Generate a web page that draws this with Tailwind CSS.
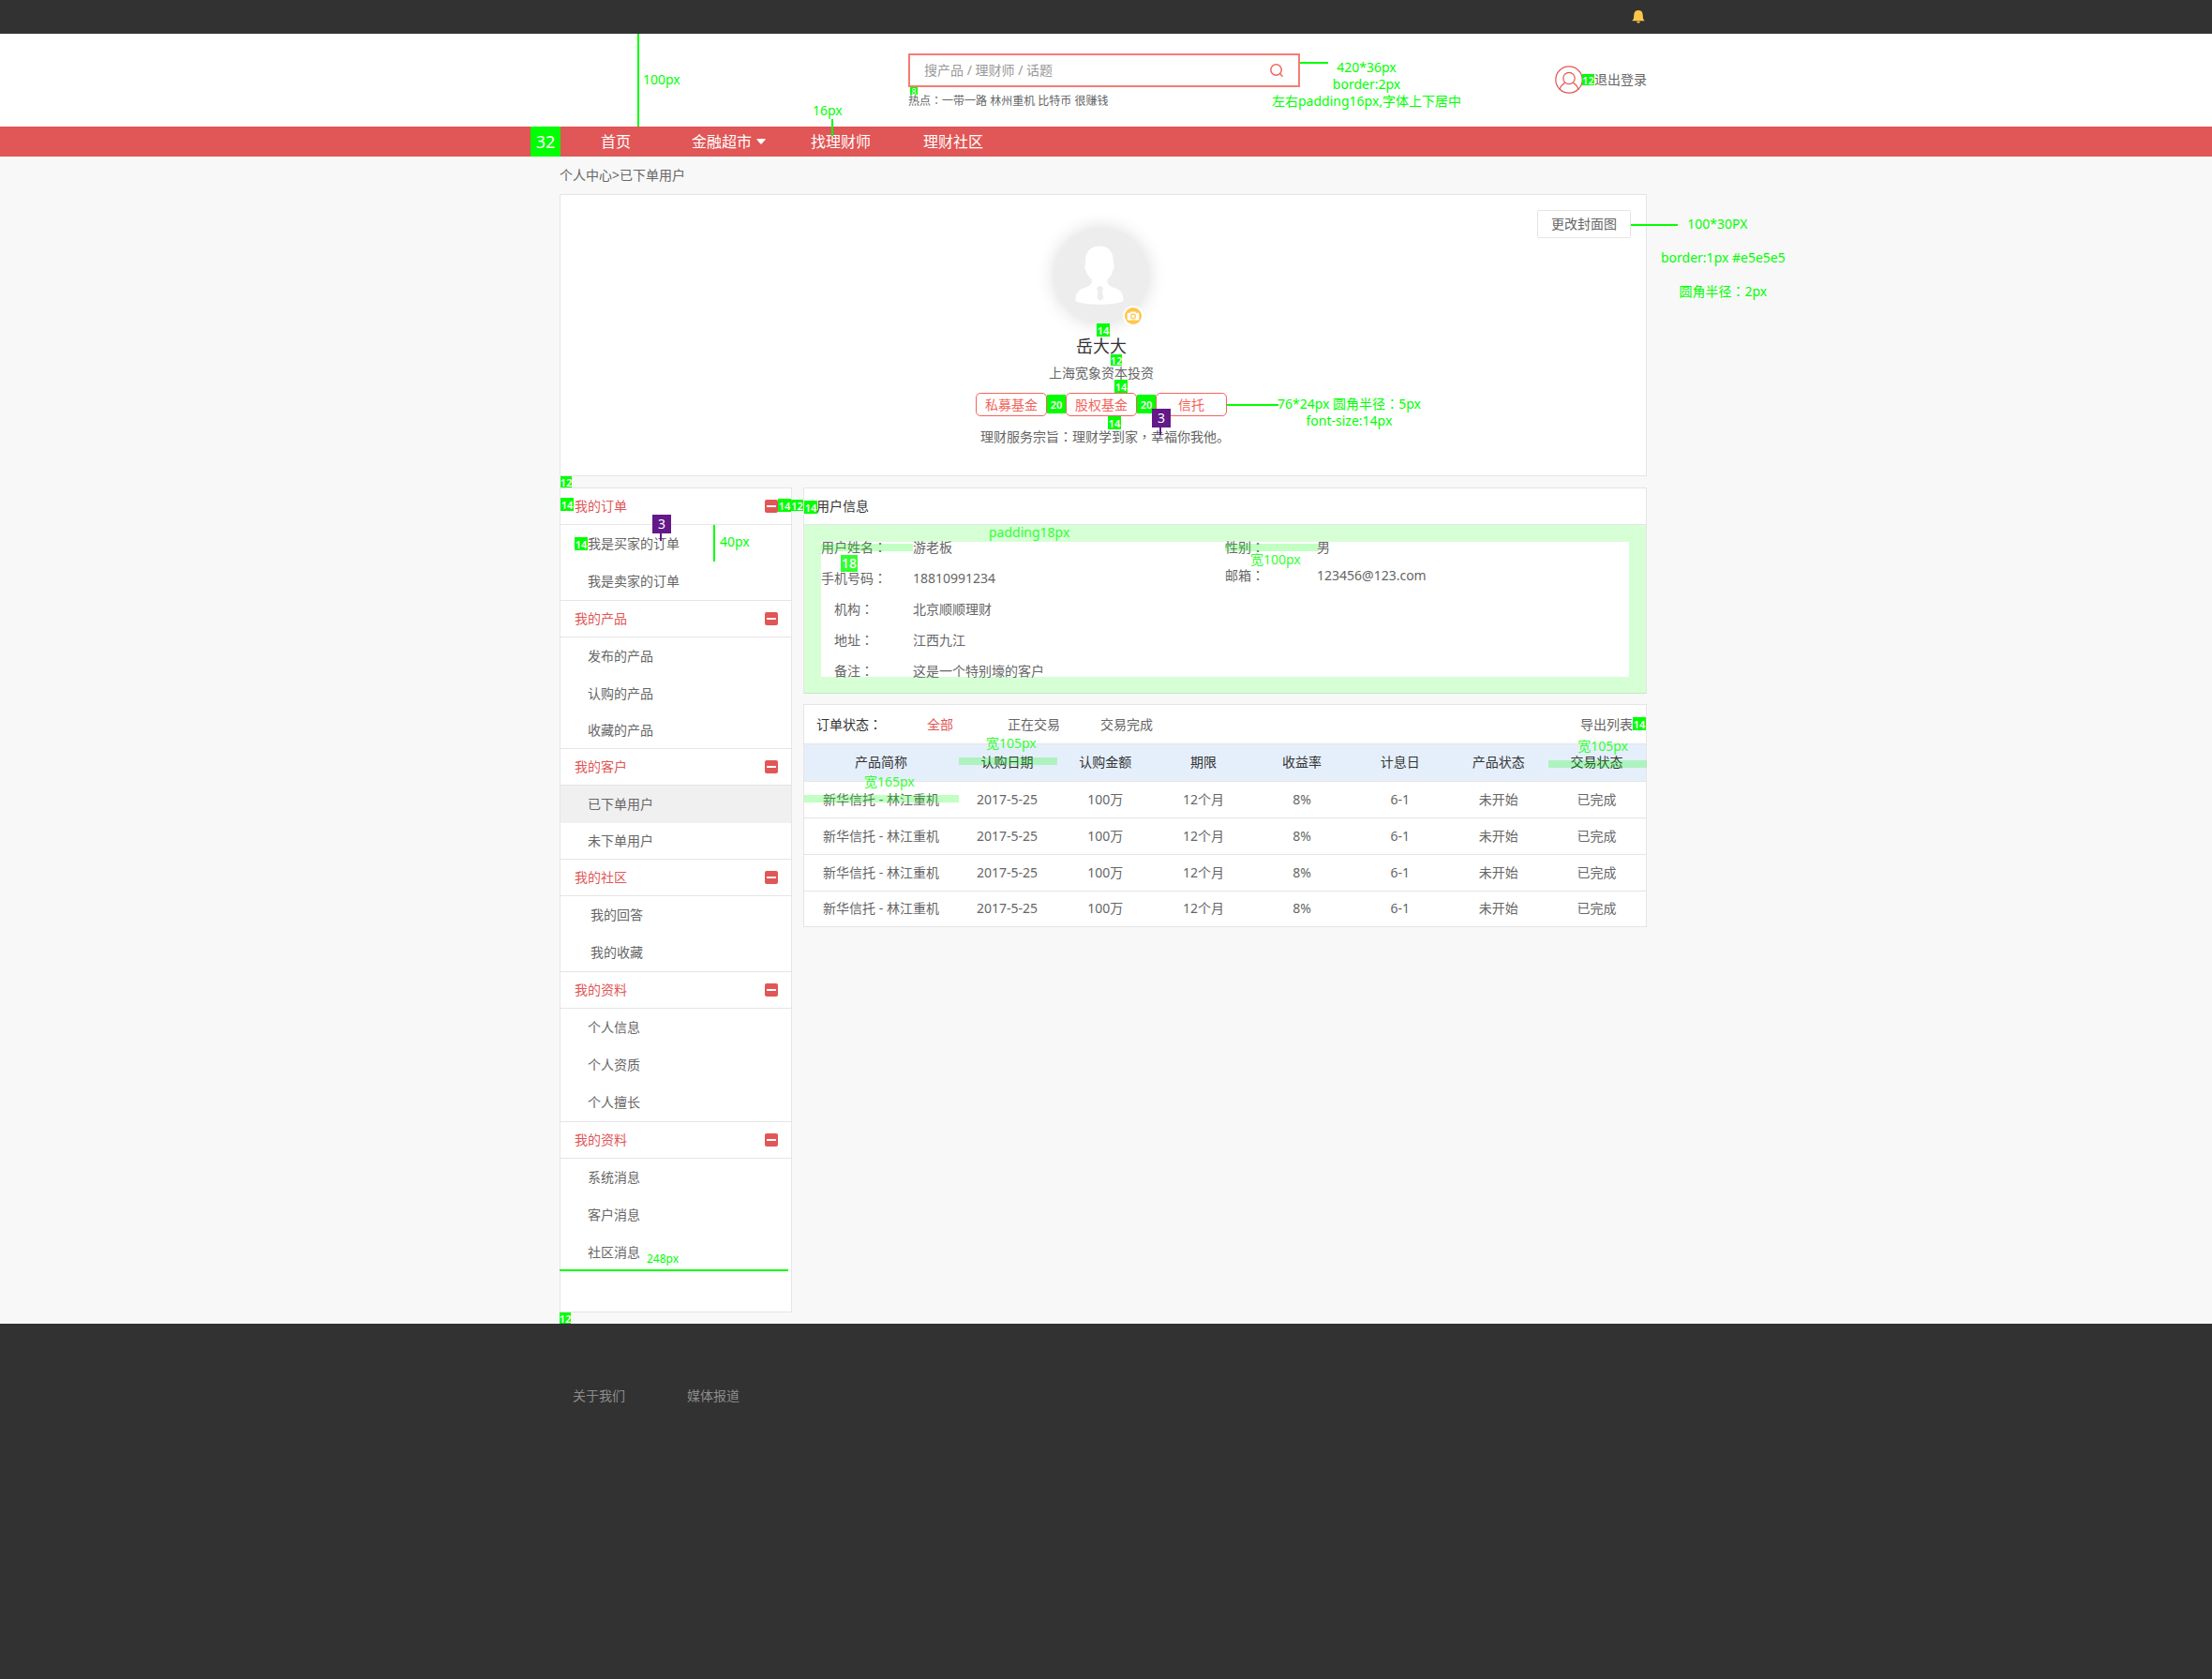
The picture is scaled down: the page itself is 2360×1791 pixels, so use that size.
<!DOCTYPE html>
<html lang="zh-CN">
<head>
<meta charset="utf-8">
<meta name="viewport" content="width=device-width, initial-scale=1">
<title>个人中心 - 已下单用户</title>
<script src="https://cdn.jsdelivr.net/npm/@tailwindcss/browser@4"></script>
</head>
<body class="flex min-h-screen flex-col bg-[#f8f8f8] font-['Noto_Sans','Noto_Sans_CJK_SC',sans-serif] text-sm leading-5 text-[#666]">

<!-- Top bar -->
<div class="bg-[#323232] pr-1.5">
  <div class="mx-auto flex h-9 w-full max-w-[1160px] items-center justify-end">
    <button type="button" aria-label="消息" class="pr-0.5">
      <svg class="h-3.5 w-3.5" viewBox="0 0 14 14" fill="#ffc64a"><path d="M7 0C4 0 2.400 2 2.300 4.800L2 8.500C1.800 9.800 .8 10.200 .4 11.300H13.600C13.200 10.200 12.200 9.800 12 8.500L11.700 4.800C11.600 2 10 0 7 0Z"/><path d="M5.200 11.800H8.800C8.800 13.200 8 13.600 7 13.600S5.200 13.200 5.200 11.800Z"/></svg>
    </button>
  </div>
</div>

<!-- Header -->
<header class="bg-white pr-1.5">
  <div class="relative mx-auto flex h-[99px] w-full max-w-[1160px] items-start justify-between">
    <form class="ml-[372px] mt-[21px] w-[418px]" onsubmit="return false">
      <div class="flex h-9 items-center border-2 border-[#f47d75] pr-4 pl-[15px]">
        <input type="search" aria-label="搜索" placeholder="搜产品 / 理财师 / 话题" class="min-w-0 flex-1 bg-transparent leading-5 outline-none placeholder:text-[#999]">
        <button type="submit" aria-label="搜索">
          <svg class="h-3.5 w-3.5" viewBox="0 0 14 14" fill="none" stroke="#f0645c" stroke-width="1.500"><circle cx="6.500" cy="6.500" r="5.700"/><path d="M10.800 10.800L13.500 13.700"/></svg>
        </button>
      </div>
      <p class="mt-[5px] text-xs leading-5">热点<span lang="zh-TW" class="font-['Noto_Sans_CJK_TC',sans-serif] leading-none">：</span><a href="#">一带一路</a> <a href="#">林州重机</a> <a href="#">比特币</a> <a href="#">很赚钱</a></p>
    </form>
    <a href="#" class="mt-[34px] flex items-center gap-3">
      <svg class="h-[30px] w-[30px]" viewBox="0 0 30 30" fill="none" stroke="#e05555" stroke-width="1.200"><circle cx="15" cy="15" r="14.200"/><circle cx="15" cy="13.500" r="6.200"/><path d="M5 25.500C6 21.500 8 19.800 10.800 18.200M25 25.500C24 21.500 22 19.800 19.200 18.200"/></svg>
      退出登录
    </a>

    <!-- Measurements -->
    <div class="absolute top-0 left-[83px] h-[99px] w-0.5 bg-[#00ff00]"></div>
    <span class="absolute top-[39px] left-[89px] text-[#00ff00]">100px</span>
    <span class="absolute top-[72px] left-[270px] text-[#00ff00]">16px</span>
    <div class="absolute top-[91px] left-[290px] z-10 h-[18px] w-0.5 bg-[#00ff00]"></div>
    <span class="absolute top-[57px] left-[374px] flex h-2 w-2 items-center justify-center bg-[#00ff00] text-[9px] leading-none text-white">8</span>
    <div class="absolute top-[30px] left-[790px] h-0.5 w-[30px] bg-[#00ff00]"></div>
    <p class="absolute top-[27px] left-[760px] text-center leading-[18px] whitespace-nowrap text-[#00ff00]">420*36px<br>border:2px<br>左右padding16px,字体上下居中</p>
    <span class="absolute top-[43px] left-[1091px] flex h-3 w-[13px] items-center justify-center bg-[#00ff00] text-[11px] leading-none font-semibold text-white">12</span>
  </div>
</header>

<!-- Navigation -->
<nav class="bg-[#e15656] pr-1.5">
  <div class="relative mx-auto flex h-8 w-full max-w-[1160px] items-center pl-11 text-base leading-6 text-white">
    <span class="absolute top-0 -left-[31px] flex h-8 w-8 items-center justify-center bg-[#00ff00] text-lg">32</span>
    <a href="#">首页</a>
    <a href="#" class="ml-[65px] flex items-center gap-[5px]">金融超市
      <svg class="h-1.5 w-2.5" viewBox="0 0 10 6" fill="#fff"><path d="M1 0H9Q10 0 9.500 1L5.600 5.500Q5 6 4.400 5.500L.5 1Q0 0 1 0Z"/></svg>
    </a>
    <a href="#" class="ml-12">找理财师</a>
    <a href="#" class="ml-14">理财社区</a>
  </div>
</nav>

<main class="pr-1.5 pb-3">
  <div class="mx-auto w-full max-w-[1160px]">
    <p class="py-[10px]"><a href="#">个人中心</a>&gt;<a href="#">已下单用户</a></p>

    <!-- Cover -->
    <section class="relative flex flex-col items-center border border-[#e5e5e5] bg-white pt-9 pr-1 pb-[31px]">
      <button type="button" class="absolute top-4 right-4 h-[30px] w-[100px] rounded-xs border border-[#e5e5e5]">更改封面图</button>
      <div class="relative h-[100px] w-[100px] rounded-full bg-[#ededed] shadow-[0_0_20px_rgba(0,0,0,0.16)]">
        <svg class="h-[100px] w-[100px]" viewBox="0 0 100 100"><path fill="#fff" d="M48 18.500C39 18.500 33.500 24 33.200 33L33 38C31.800 39.500 32.200 42 33.500 44.500C34.500 49 37.500 52 40 54.500C40.800 58 38 61.500 31 63.500C25 65.500 22.500 69 22.500 77C30 82 66 82 73.500 77C73.500 69 71 65.500 65 63.500C58 61.500 55.500 58 56.500 54.500C59 52 61.500 49 62.500 44.500C64 42 64.500 39.500 63 38L62.800 33C62.500 24 57 18.500 48 18.500Z"/><path fill="#ededed" d="M46 62Q48.500 60 51.500 62L52 64L50.800 67L52.500 74L49 77L45.500 74L46.500 67L45.200 64Z"/></svg>
        <button type="button" aria-label="更换头像" class="absolute right-[5px] -bottom-[4px] flex h-[22px] w-[22px] items-center justify-center rounded-full bg-white">
          <svg class="h-[18px] w-[18px]" viewBox="0 0 18 18"><circle cx="9" cy="9" r="9" fill="#ffc64a"/><path fill="#fff" d="M3.500 5.800H5.800L6.600 4.500H11.400L12.200 5.800H14.500Q15.300 5.800 15.300 6.600V12.600Q15.300 13.400 14.500 13.400H3.500Q2.700 13.400 2.700 12.600V6.600Q2.700 5.800 3.500 5.800Z"/><circle cx="9" cy="9.500" r="2.400" fill="none" stroke="#ffc64a" stroke-width="1.200"/></svg>
        </button>
      </div>
      <h1 class="mt-[13px] text-lg leading-6 text-[#333]">岳大大</h1>
      <p class="mt-[7px]">上海宽象资本投资</p>
      <ul class="mt-[11px] flex gap-5 text-[#f2645c]">
        <li class="flex h-[25px] w-[76px] items-center justify-center rounded-[5px] border border-[#f2645c]">私募基金</li>
        <li class="flex h-[25px] w-[76px] items-center justify-center rounded-[5px] border border-[#f2645c]">股权基金</li>
        <li class="flex h-[25px] w-[76px] items-center justify-center rounded-[5px] border border-[#f2645c]">信托</li>
      </ul>
      <p class="mt-3 pl-2">理财服务宗旨<span lang="zh-TW" class="font-['Noto_Sans_CJK_TC',sans-serif] leading-none">：</span>理财学到家<span lang="zh-TW" class="font-['Noto_Sans_CJK_TC',sans-serif] leading-none">，</span>幸福你我他。</p>

      <!-- Measurements -->
      <span class="absolute top-[137px] left-[572px] flex h-3.5 w-3.5 items-center justify-center bg-[#00ff00] text-[11px] leading-none font-semibold text-white">14</span>
      <span class="absolute top-[170px] left-[587px] flex h-3 w-3 items-center justify-center bg-[#00ff00] text-[11px] leading-none font-semibold text-white">12</span>
      <span class="absolute top-[197px] left-[591px] flex h-3.5 w-3.5 items-center justify-center bg-[#00ff00] text-[11px] leading-none font-semibold text-white">14</span>
      <span class="absolute top-[213px] left-[519px] flex h-5 w-5 items-center justify-center bg-[#00ff00] text-[11px] leading-none font-semibold text-white">20</span>
      <span class="absolute top-[213px] left-[615px] flex h-5 w-5 items-center justify-center bg-[#00ff00] text-[11px] leading-none font-semibold text-white">20</span>
      <span class="absolute top-[236px] left-[584px] flex h-3.5 w-3.5 items-center justify-center bg-[#00ff00] text-[11px] leading-none font-semibold text-white">14</span>
      <span class="absolute top-[228px] left-[631px] flex h-5 w-5 items-center justify-center bg-[#631987] leading-none text-white">3</span>
      <div class="absolute top-[248px] left-[639px] h-2 w-0.5 bg-[#631987]"></div>
      <div class="absolute top-[223px] left-[711px] h-0.5 w-[55px] bg-[#00ff00]"></div>
      <p class="absolute top-[214px] left-[765px] text-center leading-[18px] whitespace-nowrap text-[#00ff00]">76*24px 圆角半径<span lang="zh-TW" class="font-['Noto_Sans_CJK_TC',sans-serif] leading-none">：</span>5px<br>font-size:14px</p>
      <div class="absolute top-[31px] left-[1142px] h-0.5 w-[50px] bg-[#00ff00]"></div>
      <p class="absolute top-[13px] left-[1174px] text-center leading-9 whitespace-nowrap text-[#00ff00]"><span class="pr-3">100*30PX</span><br>border:1px #e5e5e5<br>圆角半径<span lang="zh-TW" class="font-['Noto_Sans_CJK_TC',sans-serif] leading-none">：</span>2px</p>
      <span class="absolute top-[300px] left-0 flex h-3 w-3 items-center justify-center bg-[#00ff00] text-[11px] leading-none font-semibold text-white">12</span>
    </section>

    <div class="mt-3 flex items-start gap-3">
      <!-- Side menu -->
      <aside class="relative w-[248px] shrink-0 border border-[#e5e5e5] bg-white pb-[43px]">
        <h2 class="flex h-[39px] items-center justify-between border-b border-[#e5e5e5] pr-3.5 pl-[15px] text-[#e15656]">我的订单
          <button type="button" aria-label="收起我的订单" class="flex h-3.5 w-3.5 items-center justify-center rounded-xs bg-[#e15656]"><span class="h-0.5 w-2.5 bg-white"></span></button></h2>
        <ul>
          <li><a href="#" class="flex h-10 items-center pl-[29px]">我是买家的订单</a></li>
          <li><a href="#" class="flex h-10 items-center pl-[29px]">我是卖家的订单</a></li>
        </ul>
        <h2 class="flex h-10 items-center justify-between border-y border-[#e5e5e5] pr-3.5 pl-[15px] text-[#e15656]">我的产品
          <button type="button" aria-label="收起我的产品" class="flex h-3.5 w-3.5 items-center justify-center rounded-xs bg-[#e15656]"><span class="h-0.5 w-2.5 bg-white"></span></button></h2>
        <ul>
          <li><a href="#" class="flex h-10 items-center pl-[29px]">发布的产品</a></li>
          <li><a href="#" class="flex h-10 items-center pl-[29px]">认购的产品</a></li>
          <li><a href="#" class="flex h-[38px] items-center pl-[29px]">收藏的产品</a></li>
        </ul>
        <h2 class="flex h-10 items-center justify-between border-y border-[#e5e5e5] pr-3.5 pl-[15px] text-[#e15656]">我的客户
          <button type="button" aria-label="收起我的客户" class="flex h-3.5 w-3.5 items-center justify-center rounded-xs bg-[#e15656]"><span class="h-0.5 w-2.5 bg-white"></span></button></h2>
        <ul>
          <li><a href="#" aria-current="page" class="flex h-10 items-center bg-[#f0f0f0] pl-[29px]">已下单用户</a></li>
          <li><a href="#" class="flex h-[38px] items-center pl-[29px]">未下单用户</a></li>
        </ul>
        <h2 class="flex h-10 items-center justify-between border-y border-[#e5e5e5] pr-3.5 pl-[15px] text-[#e15656]">我的社区
          <button type="button" aria-label="收起我的社区" class="flex h-3.5 w-3.5 items-center justify-center rounded-xs bg-[#e15656]"><span class="h-0.5 w-2.5 bg-white"></span></button></h2>
        <ul>
          <li><a href="#" class="flex h-10 items-center pl-8">我的回答</a></li>
          <li><a href="#" class="flex h-10 items-center pl-8">我的收藏</a></li>
        </ul>
        <h2 class="flex h-10 items-center justify-between border-y border-[#e5e5e5] pr-3.5 pl-[15px] text-[#e15656]">我的资料
          <button type="button" aria-label="收起我的资料" class="flex h-3.5 w-3.5 items-center justify-center rounded-xs bg-[#e15656]"><span class="h-0.5 w-2.5 bg-white"></span></button></h2>
        <ul>
          <li><a href="#" class="flex h-10 items-center pl-[29px]">个人信息</a></li>
          <li><a href="#" class="flex h-10 items-center pl-[29px]">个人资质</a></li>
          <li><a href="#" class="flex h-10 items-center pl-[29px]">个人擅长</a></li>
        </ul>
        <h2 class="flex h-10 items-center justify-between border-y border-[#e5e5e5] pr-3.5 pl-[15px] text-[#e15656]">我的资料
          <button type="button" aria-label="收起消息" class="flex h-3.5 w-3.5 items-center justify-center rounded-xs bg-[#e15656]"><span class="h-0.5 w-2.5 bg-white"></span></button></h2>
        <ul>
          <li><a href="#" class="flex h-10 items-center pl-[29px]">系统消息</a></li>
          <li><a href="#" class="flex h-10 items-center pl-[29px]">客户消息</a></li>
          <li><a href="#" class="flex h-10 items-center pl-[29px]">社区消息</a></li>
        </ul>

        <!-- Measurements -->
        <span class="absolute top-[10px] left-0 flex h-3.5 w-3.5 items-center justify-center bg-[#00ff00] text-[11px] leading-none font-semibold text-white">14</span>
        <span class="absolute top-[52px] left-[15px] flex h-3.5 w-3.5 items-center justify-center bg-[#00ff00] text-[11px] leading-none font-semibold text-white">14</span>
        <span class="absolute top-7 left-[98px] flex h-5 w-5 items-center justify-center bg-[#631987] leading-none text-white">3</span>
        <div class="absolute top-12 left-[106px] h-2 w-0.5 bg-[#631987]"></div>
        <div class="absolute top-[39px] left-[163px] h-[39px] w-0.5 bg-[#00ff00]"></div>
        <span class="absolute top-[47px] left-[170px] text-[#00ff00]">40px</span>
        <span class="absolute top-[11px] left-[232px] flex h-3.5 w-3.5 items-center justify-center bg-[#00ff00] text-[11px] leading-none font-semibold text-white">14</span>
        <span class="absolute top-3 left-[246px] flex h-3 w-[13px] items-center justify-center bg-[#00ff00] text-[11px] leading-none font-semibold text-white">12</span>
        <span class="absolute bottom-[46px] left-[92px] text-xs leading-5 text-[#00ff00]">248px</span>
        <div class="absolute bottom-[43px] -left-px h-0.5 w-[244px] bg-[#00ff00]"></div>
        <span class="absolute -bottom-[13px] -left-px flex h-3 w-3 items-center justify-center bg-[#00ff00] text-[11px] leading-none font-semibold text-white">12</span>
      </aside>

      <div class="flex min-w-0 flex-1 flex-col gap-[11px]">
        <!-- Customer information -->
        <section class="relative border border-[#e5e5e5] bg-white">
          <h2 class="flex h-[39px] items-center border-b border-[#e5e5e5] px-[13px] text-[#333]">用户信息</h2>
          <div class="relative grid grid-cols-2 p-[18px] pb-[17px] leading-3">
            <dl class="flex flex-col gap-[21px]">
              <div class="flex h-3 gap-7"><dt class="w-[70px] text-center">用户姓名<span lang="zh-TW" class="font-['Noto_Sans_CJK_TC',sans-serif] leading-[8px]">：</span></dt><dd>游老板</dd></div>
              <div class="flex h-3 gap-7"><dt class="w-[70px] text-center">手机号码<span lang="zh-TW" class="font-['Noto_Sans_CJK_TC',sans-serif] leading-[8px]">：</span></dt><dd>18810991234</dd></div>
              <div class="flex h-3 gap-7"><dt class="w-[70px] text-center">机构<span lang="zh-TW" class="font-['Noto_Sans_CJK_TC',sans-serif] leading-[8px]">：</span></dt><dd>北京顺顺理财</dd></div>
              <div class="flex h-3 gap-7"><dt class="w-[70px] text-center">地址<span lang="zh-TW" class="font-['Noto_Sans_CJK_TC',sans-serif] leading-[8px]">：</span></dt><dd>江西九江</dd></div>
              <div class="flex h-3 gap-7"><dt class="w-[70px] text-center">备注<span lang="zh-TW" class="font-['Noto_Sans_CJK_TC',sans-serif] leading-[8px]">：</span></dt><dd>这是一个特别壕的客户</dd></div>
            </dl>
            <dl class="flex flex-col gap-[18px]">
              <div class="flex h-3"><dt class="w-[98px]">性别<span lang="zh-TW" class="font-['Noto_Sans_CJK_TC',sans-serif] leading-[8px]">：</span></dt><dd>男</dd></div>
              <div class="flex h-3"><dt class="w-[98px]">邮箱<span lang="zh-TW" class="font-['Noto_Sans_CJK_TC',sans-serif] leading-[8px]">：</span></dt><dd>123456@123.com</dd></div>
            </dl>

            <!-- Measurements -->
            <div class="pointer-events-none absolute inset-x-0 top-0 -bottom-px border-[18px] border-[#00ff00]/16"></div>
            <span class="absolute -top-px left-[197px] leading-[18px] text-[#33ff33]">padding18px</span>
            <div class="absolute top-5 left-[18px] h-2 w-[98px] bg-[#00ff00]/24"></div>
            <div class="absolute top-5 left-1/2 h-2 w-[100px] bg-[#00ff00]/24"></div>
            <span class="absolute top-7 left-[476px] leading-[18px] text-[#33ff33]">宽100px</span>
            <span class="absolute top-8 left-[39px] flex h-[18px] w-[18px] items-center justify-center bg-[#33ff33] leading-none font-medium text-white">18</span>
          </div>
          <span class="absolute top-[13px] left-0 flex h-3.5 w-3.5 items-center justify-center bg-[#00ff00] text-[11px] leading-none font-semibold text-white">14</span>
        </section>

        <!-- Orders -->
        <section class="relative border border-[#e5e5e5] bg-white">
          <div class="flex h-[42px] items-center border-b border-[#e5e5e5] pr-3.5 pl-[13px]">
            <span class="text-[#333]">订单状态<span lang="zh-TW" class="font-['Noto_Sans_CJK_TC',sans-serif] leading-none">：</span></span>
            <a href="#" class="ml-12 text-[#e15656]">全部</a>
            <a href="#" class="ml-[58px]">正在交易</a>
            <a href="#" class="ml-[43px]">交易完成</a>
            <a href="#" class="ml-auto">导出列表</a>
          </div>
          <table class="w-full table-fixed border-collapse text-center">
            <colgroup><col class="w-[164px]"><col><col><col><col><col><col><col></colgroup>
            <thead>
              <tr class="h-[39px] border-b border-[#e5e5e5] bg-[#e5effb] text-[#333]">
                <th scope="col" class="font-normal">产品简称</th><th scope="col" class="font-normal">认购日期</th><th scope="col" class="font-normal">认购金额</th><th scope="col" class="font-normal">期限</th><th scope="col" class="font-normal">收益率</th><th scope="col" class="font-normal">计息日</th><th scope="col" class="font-normal">产品状态</th><th scope="col" class="font-normal">交易状态</th>
              </tr>
            </thead>
            <tbody>
              <tr class="h-[39px] border-b border-[#e5e5e5]"><td>新华信托 - 林江重机</td><td>2017-5-25</td><td>100万</td><td>12个月</td><td>8%</td><td>6-1</td><td>未开始</td><td>已完成</td></tr>
              <tr class="h-[39px] border-b border-[#e5e5e5]"><td>新华信托 - 林江重机</td><td>2017-5-25</td><td>100万</td><td>12个月</td><td>8%</td><td>6-1</td><td>未开始</td><td>已完成</td></tr>
              <tr class="h-[39px] border-b border-[#e5e5e5]"><td>新华信托 - 林江重机</td><td>2017-5-25</td><td>100万</td><td>12个月</td><td>8%</td><td>6-1</td><td>未开始</td><td>已完成</td></tr>
              <tr class="h-[38px]"><td>新华信托 - 林江重机</td><td>2017-5-25</td><td>100万</td><td>12个月</td><td>8%</td><td>6-1</td><td>未开始</td><td>已完成</td></tr>
            </tbody>
          </table>

          <!-- Measurements -->
          <span class="absolute top-[13px] right-0 flex h-3.5 w-3.5 items-center justify-center bg-[#00ff00] text-[11px] leading-none font-semibold text-white">14</span>
          <span class="absolute top-[31px] left-[194px] text-[#33ff33]">宽105px</span>
          <div class="absolute top-14 left-[165px] h-2 w-[105px] bg-[#00ff00]/24"></div>
          <span class="absolute top-[34px] right-[19px] text-[#33ff33]">宽105px</span>
          <div class="absolute top-[59px] -right-px h-2 w-[105px] bg-[#00ff00]/24"></div>
          <span class="absolute top-[72px] left-16 text-[#33ff33]">宽165px</span>
          <div class="absolute top-24 left-0 h-2 w-[165px] bg-[#00ff00]/24"></div>
        </section>
      </div>
    </div>
  </div>
</main>

<footer class="flex-1 bg-[#323232] pr-1.5">
  <div class="mx-auto flex w-full max-w-[1160px] gap-[66px] px-3.5 pt-[67px] pb-16 text-[#8c8c8c]">
    <a href="#">关于我们</a>
    <a href="#">媒体报道</a>
  </div>
</footer>
</body>
</html>
